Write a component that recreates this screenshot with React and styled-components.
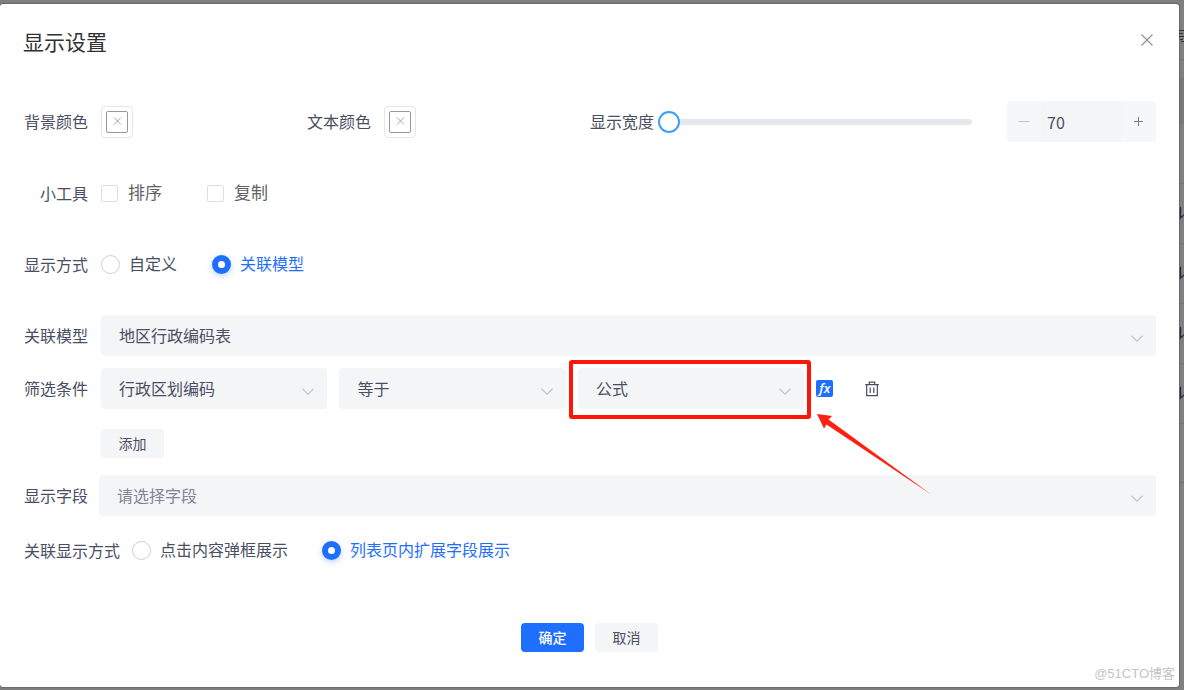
import { useState } from "react";
import styled, { createGlobalStyle } from "styled-components";

const GlobalStyle = createGlobalStyle`
    * { box-sizing: border-box; }

    body {
        margin: 0;
        background: #808080;
        color: #4a4e63;
        font-family: "Noto Sans CJK SC", sans-serif;
        font-size: 16px;
    }

    button, input, select { font: inherit; color: inherit; }
`;

const pageRows = [60, 18, 46, 60, 60, 60, 60, 60, 59];

function SelectField({ id, label, options, placeholder }) {
    return (
        <SelectBox>
            <Select id={id} aria-label={label} $placeholder={placeholder} defaultValue={options[0]}>
                {options.map((o) => (
                    <option key={o}>{o}</option>
                ))}
            </Select>
            <Chevron viewBox="0 0 12 7" aria-hidden="true">
                <path d="M0.5 0.8 6 6.2 11.5 0.8" />
            </Chevron>
        </SelectBox>
    );
}

function ColorPicker({ id }) {
    return (
        <ColorButton id={id} type="button">
            <ColorInner>
                <svg width="9" height="9" viewBox="0 0 9 9" aria-hidden="true">
                    <path d="M1 0.5l7 7M8 0.5L1 7.5" stroke="#999" strokeWidth="0.9" />
                </svg>
            </ColorInner>
        </ColorButton>
    );
}

function RadioGroup({ name, options, value, onChange, gap }) {
    return (
        <Options $gap={gap}>
            {options.map((o) => (
                <RadioLabel key={o} $checked={o === value}>
                    <Radio type="radio" name={name} checked={o === value} onChange={() => onChange(o)} />
                    <OptionText>{o}</OptionText>
                </RadioLabel>
            ))}
        </Options>
    );
}

export default function App() {
    const [width, setWidth] = useState(70);
    const [mode, setMode] = useState("关联模型");
    const [display, setDisplay] = useState("列表页内扩展字段展示");

    return (
        <Screen>
            <GlobalStyle />
            <Dialog role="dialog" aria-labelledby="title">
                <Header>
                    <Title id="title">显示设置</Title>
                    <CloseButton type="button" aria-label="关闭">
                        <svg width="14" height="14" viewBox="0 0 14 14" aria-hidden="true">
                            <path d="M1.5 1.5l11 11M12.5 1.5l-11 11" stroke="#909399" strokeWidth="1.2" />
                        </svg>
                    </CloseButton>
                </Header>

                <Form>
                    <Columns>
                        <Row>
                            <Label htmlFor="bg">背景颜色</Label>
                            <ColorPicker id="bg" />
                        </Row>
                        <Row>
                            <Label htmlFor="fg">文本颜色</Label>
                            <ColorPicker id="fg" />
                        </Row>
                        <Row $gap={4}>
                            <Label htmlFor="width">显示宽度</Label>
                            <Slider
                                id="width"
                                type="range"
                                min="70"
                                max="500"
                                value={width}
                                onChange={(e) => setWidth(Number(e.target.value))}
                            />
                            <Stepper>
                                <StepButton type="button" aria-label="减少" disabled={width <= 70} onClick={() => setWidth(width - 1)}>
                                    <svg width="12" height="12" viewBox="0 0 12 12" aria-hidden="true">
                                        <path d="M0.5 5.5h11" stroke="currentColor" />
                                    </svg>
                                </StepButton>
                                <StepInput
                                    aria-label="宽度"
                                    value={width}
                                    onChange={(e) => setWidth(Number(e.target.value) || 70)}
                                />
                                <StepButton type="button" aria-label="增加" onClick={() => setWidth(width + 1)}>
                                    <svg width="12" height="12" viewBox="0 0 12 12" aria-hidden="true">
                                        <path d="M1 5.5h9M5.5 1v9" stroke="currentColor" />
                                    </svg>
                                </StepButton>
                            </Stepper>
                        </Row>
                    </Columns>

                    <Row $space={30}>
                        <Label as="span">小工具</Label>
                        <Options $gap={45}>
                            <CheckLabel><Checkbox type="checkbox" /><OptionText>排序</OptionText></CheckLabel>
                            <CheckLabel><Checkbox type="checkbox" /><OptionText>复制</OptionText></CheckLabel>
                        </Options>
                    </Row>

                    <Row $space={30}>
                        <Label as="span">显示方式</Label>
                        <RadioGroup name="mode" gap={35} options={["自定义", "关联模型"]} value={mode} onChange={setMode} />
                    </Row>

                    <Row $space={12}>
                        <Label htmlFor="model">关联模型</Label>
                        <SelectField id="model" options={["地区行政编码表"]} />
                    </Row>

                    <Row $space={20}>
                        <Label htmlFor="field">筛选条件</Label>
                        <Filter>
                            <SelectField id="field" options={["行政区划编码"]} />
                            <SelectField label="条件" options={["等于"]} />
                            <Marked>
                                <SelectField label="取值" options={["公式"]} />
                                <Highlight />
                                <Arrow viewBox="0 0 116 82" aria-hidden="true">
                                    <path d="M0 0 15 2 11.5 5.5 115 81 9.5 10.5 7 14.5Z" fill="#ff2010" />
                                </Arrow>
                            </Marked>
                            <Tools>
                                <FormulaButton type="button">fx</FormulaButton>
                                <IconButton type="button" aria-label="删除">
                                    <svg width="14" height="16" viewBox="0 0 14 16" fill="none" stroke="#4a4e63" strokeWidth="1.2" aria-hidden="true">
                                        <path d="M0.2 3.6h13.6M1.700 3.600v11h10.600v-11M4.300 3.400v-2.300h5.400v2.300M5.200 6.500v5.500M8.800 6.500v5.500" />
                                    </svg>
                                </IconButton>
                            </Tools>
                        </Filter>
                    </Row>

                    <AddRow>
                        <Button type="button">添加</Button>
                    </AddRow>

                    <Row $gap={11} $space={14}>
                        <Label htmlFor="show">显示字段</Label>
                        <SelectField id="show" placeholder="true" options={["请选择字段"]} />
                    </Row>

                    <Row $gap={12}>
                        <Label as="span">关联显示方式</Label>
                        <RadioGroup
                            name="display"
                            gap={34}
                            options={["点击内容弹框展示", "列表页内扩展字段展示"]}
                            value={display}
                            onChange={setDisplay}
                        />
                    </Row>
                </Form>

                <Footer>
                    <Button type="button" $primary>确定</Button>
                    <Button type="button">取消</Button>
                </Footer>
                <Watermark>@51CTO博客</Watermark>
            </Dialog>

            {/* Edge of the page under the mask */}
            <PageEdge aria-hidden="true">
                {pageRows.map((height, i) => (
                    <PageRow key={i} $height={height} $first={i === 0} $head={i === 2} $line={i !== 1 && i !== 2}>
                        {i > 3 && i < 8 && (
                            <svg width="5" height="14" viewBox="0 0 5 14">
                                <path d="M1.5 0v11L5 8" fill="none" stroke="#262b45" strokeWidth="1.3" />
                            </svg>
                        )}
                        {i === 0 && (
                            <svg width="5" height="14" viewBox="0 0 5 14">
                                <path d="M0 1.500h5M0 4.500h4M0 7.500h5M1 10.500h3M2 12.500h3" fill="none" stroke="#333" />
                            </svg>
                        )}
                    </PageRow>
                ))}
            </PageEdge>
        </Screen>
    );
}

const Screen = styled.div`
    display: flex;
    padding: 4px 0 3px;
`;

const Dialog = styled.main`
    position: relative;
    flex: 1;
    min-width: 0;
    background: #fff;
    border-radius: 3px;
    box-shadow: 0 0 2px rgba(0, 0, 0, 0.6);
`;

const Header = styled.header`
    display: flex;
    justify-content: space-between;
    padding: 24px 23px 47px;
`;

const Title = styled.h1`
    margin: 0;
    font-size: 21px;
    line-height: 26px;
    font-weight: 400;
    color: #303133;
`;

const CloseButton = styled.button`
    display: flex;
    align-items: center;
    justify-content: center;
    width: 18px;
    height: 24px;
    padding: 0;
    border: 0;
    background: none;
    cursor: pointer;
`;

const Form = styled.form`
    padding: 0 23px 0 24px;
`;

const Columns = styled.div`
    display: grid;
    grid-template-columns: 1fr 1fr 2fr;
    margin-bottom: 31px;
`;

const Row = styled.div`
    display: flex;
    align-items: center;
    gap: ${props => props.$gap || 13}px;
    height: 41px;
    margin-bottom: ${props => props.$space || 0}px;
`;

const Label = styled.label`
    min-width: 64px;
    padding-bottom: 2px;
    line-height: 24px;
    text-align: right;
    white-space: nowrap;
`;

const ColorButton = styled.button`
    display: flex;
    align-items: center;
    justify-content: center;
    width: 32px;
    height: 32px;
    padding: 0;
    border: 1px solid #e6e6e6;
    border-radius: 4px;
    background: #fff;
`;

const ColorInner = styled.span`
    display: flex;
    align-items: center;
    justify-content: center;
    width: 22px;
    height: 22px;
    border: 1px solid #999;
    border-radius: 2px;
`;

const Slider = styled.input`
    appearance: none;
    flex: 1;
    min-width: 0;
    height: 22px;
    margin: 0 31px 0 0;
    background: none;

    &::-webkit-slider-runnable-track {
        height: 6px;
        border-radius: 3px;
        background: #e4e7ed;
    }

    &::-webkit-slider-thumb {
        appearance: none;
        width: 22px;
        height: 22px;
        margin-top: -8px;
        border: 2px solid #409eff;
        border-radius: 50%;
        background: #fff;
    }
`;

const Stepper = styled.div`
    display: flex;
    width: 149px;
    height: 41px;
    border-radius: 4px;
    overflow: hidden;
    background: #f4f5f7;
`;

const StepButton = styled.button`
    display: flex;
    align-items: center;
    justify-content: center;
    width: 34px;
    padding: 0;
    border: 0;
    background: #f5f7fa;
    color: #7d8088;

    &:disabled { color: #c0c4cc; }
`;

const StepInput = styled.input`
    flex: 1;
    min-width: 0;
    padding: 0 6px;
    border: 0;
    background: none;
`;

const Options = styled.div`
    display: flex;
    gap: ${props => props.$gap}px;
`;

const OptionText = styled.span`
    padding-bottom: 4px;
`;

const CheckLabel = styled.label`
    display: flex;
    align-items: center;
    gap: 10px;
    font-size: 17px;
    line-height: 24px;
    color: #606266;
`;

const Checkbox = styled.input`
    appearance: none;
    width: 17px;
    height: 17px;
    margin: 0;
    border: 1px solid #dcdfe6;
    border-radius: 2px;
    background: #fff;

    &:checked { background: #1f6fff; }
`;

const RadioLabel = styled.label`
    display: flex;
    align-items: center;
    gap: 9px;
    line-height: 24px;
    color: ${props => props.$checked ? '#1f6fff' : '#4a4e63'};
`;

const Radio = styled.input`
    appearance: none;
    width: 19px;
    height: 19px;
    margin: 0;
    border: 1px solid #cdd0dc;
    border-radius: 50%;
    background: #fff;

    &:checked {
        border: 6px solid #1f6fff;
        box-shadow: 0 2px 6px rgba(31, 111, 255, 0.3);
    }
`;

const SelectBox = styled.div`
    display: grid;
    flex: 1;
    min-width: 0;
    align-items: center;
`;

const Select = styled.select`
    appearance: none;
    grid-area: 1 / 1;
    width: 100%;
    height: 41px;
    padding: 0 36px 1px 18px;
    border: 0;
    border-radius: 4px;
    background: #f4f5f7;
    color: ${props => props.$placeholder ? '#7f8496' : '#4a4e63'};
`;

const Chevron = styled.svg`
    grid-area: 1 / 1;
    justify-self: end;
    width: 12px;
    height: 7px;
    margin: 5px 13px 0 0;
    fill: none;
    stroke: #c0c4cc;
    stroke-width: 1.2;
    pointer-events: none;
`;

const Filter = styled.div`
    display: grid;
    flex: 1;
    grid-template-columns: 2fr 2fr 2fr 3fr;
    gap: 12px;
`;

const Marked = styled.div`
    position: relative;
`;

const Highlight = styled.span`
    position: absolute;
    inset: -8px -7px -10px -9px;
    border: 4px solid #ff1408;
    border-radius: 3px;
    pointer-events: none;
`;

const Arrow = styled.svg`
    position: absolute;
    top: 46px;
    left: calc(100% + 13px);
    width: 116px;
    height: 82px;
    pointer-events: none;
`;

const Tools = styled.div`
    display: flex;
    align-items: center;
    gap: 32px;
`;

const FormulaButton = styled.button`
    width: 17px;
    height: 17px;
    padding: 0;
    border: 0;
    border-radius: 2px;
    background: #1f6fff;
    color: #fff;
    font-family: "Open Sans", sans-serif;
    font-size: 13px;
    font-style: italic;
    font-weight: 600;
    line-height: 15px;
`;

const IconButton = styled.button`
    display: flex;
    padding: 0;
    border: 0;
    background: none;
`;

const AddRow = styled.div`
    display: flex;
    margin-bottom: 17px;
    padding-left: 77px;
`;

const Button = styled.button`
    width: 63px;
    height: 29px;
    padding: 0 0 2px;
    border: 0;
    border-radius: 4px;
    background: ${props => props.$primary ? '#1f6fff' : '#f4f5f7'};
    color: ${props => props.$primary ? '#fff' : '#4a4e63'};
    font-size: 14px;
    font-weight: ${props => props.$primary ? 500 : 400};
    cursor: pointer;
`;

const Footer = styled.footer`
    display: flex;
    justify-content: center;
    gap: 11px;
    padding: 52px 0 35px;
`;

const Watermark = styled.span`
    position: absolute;
    right: 4px;
    bottom: 4px;
    font-family: "Liberation Sans", "Noto Sans CJK SC", sans-serif;
    font-size: 13px;
    line-height: 18px;
    color: #c4c4c4;
`;

const PageEdge = styled.div`
    width: 5px;
    margin-top: -4px;
`;

const PageRow = styled.div`
    display: flex;
    align-items: center;
    height: ${props => props.$height}px;
    padding-top: ${props => props.$first ? 12 : 0}px;
    border-bottom: ${props => props.$line ? '1px solid #757575' : '0'};
    background: ${props => props.$head ? '#7a7978' : 'transparent'};
`;
